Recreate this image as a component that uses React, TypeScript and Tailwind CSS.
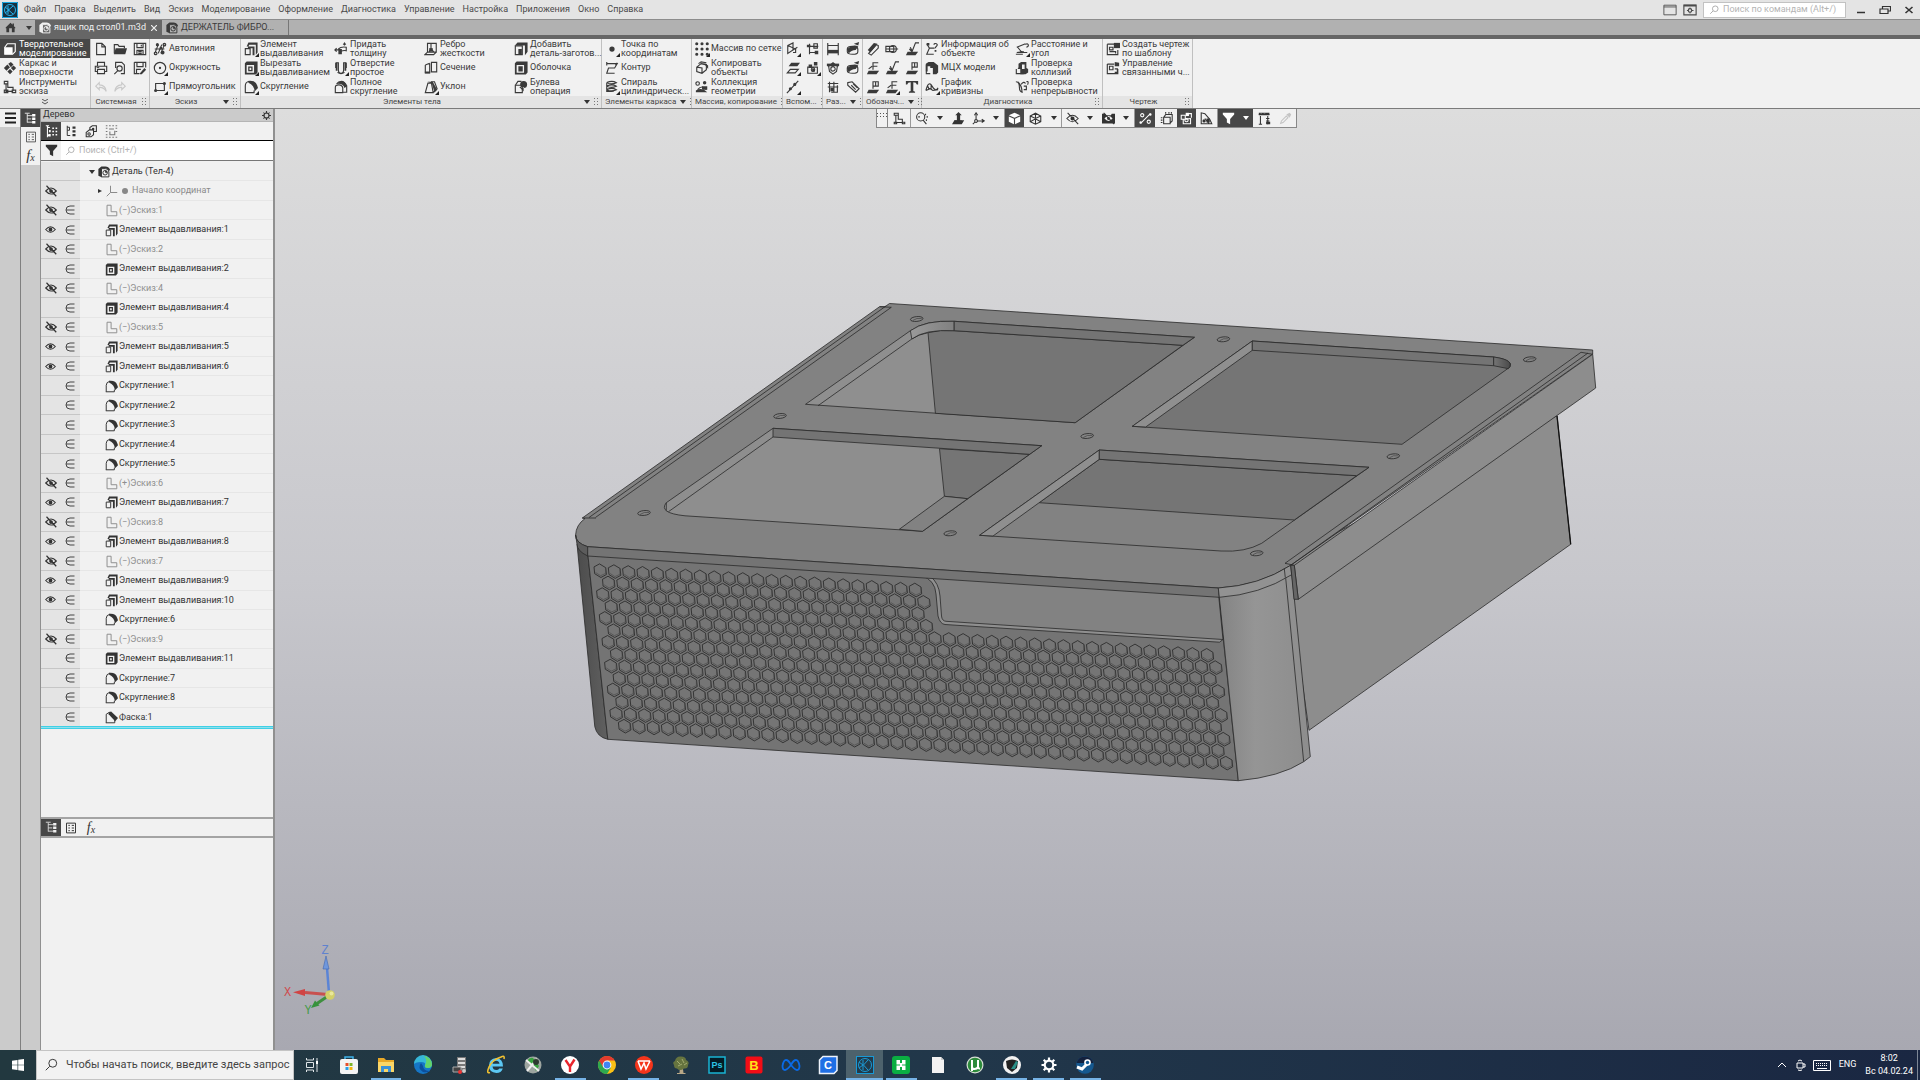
import React, { ReactNode } from "react";

const c = (x: number, y: number, r: number) =>
  `M${x - r} ${y}a${r} ${r} 0 1 0 ${2 * r} 0a${r} ${r} 0 1 0 ${-2 * r} 0z`;

/* Each glyph: [stroked path, filled path] on a 16x16 grid. */
const GLYPHS: Record<string, [string, string?]> = {
  solid: ["M2 6l3-4h9v9l-3 3H2z", "M2 6h9v8H2z"],
  surface: ["", "M1 8l4-4 3 3-4 4zM6 3l3-2 3 3-3 3zM9 8l3-3 3 3-3 3zM5 12l3-3 3 3-3 3z"],
  sketchTools: ["M3.500 4v9h8M5.500 3.500v5h6v4M1.500 1.500h4v3h-4zM1.500 11.500h4v3h-4zM10.500 11.500h4v3h-4z"],
  file: ["M3 1.5h6l4 4v9H3zM9 1.5v4h4"],
  folder: ["M1.5 13V3h4l1.5 2H13v2", "M3 7h13l-2 7H1z"],
  save: ["M1.5 1.5h13v13h-13zM4.500 1.500v5h7v-5M4.500 14.500v-5h7v5M6 11h4M6 13h4M9.500 3v2"],
  print: ["M4 6V1.500h8V6M4 12H1.500V6h13v6H12M4 9.500h8v5H4z", "M3 7h3v1H3z"],
  preview: ["M3 8V1.500h7l3 3v10H9" + c(7.5, 8.5, 3) + "M5.500 11l-4 4"],
  saveAs: ["M1.500 1.500h13v6M1.500 1.500v13h6M4.500 1.500v5h7v-5M4 14V9.500h5", "M8 14l5-6 2 2-5 5H8z"],
  undo: ["M6 3L2 7l4 4V8.500q5-.5 8 4.500q-.5-7-8-7.500z"],
  redo: ["M10 3l4 4-4 4V8.500q-5-.5-8 4.500q.5-7 8-7.500z"],
  autoline: ["M2 13L6 3M6 13L10 3M9 13l4-10M2 8h11" + c(3, 13, 1.5) + c(13, 3, 1.5), c(5, 3, 1.8) + c(11, 12, 2.2) + c(9, 7, 1.6)],
  circle: [c(8, 8, 6.5), c(8, 8, 1.3)],
  rect: ["M3 4h10v8H3z", c(3, 12, 1.800) + c(13, 4, 1.800)],
  extrude: ["M1.500 7.500h5.500v7H1.500z", "M3 5l2-4.500h10.500V12l-2 2.500V3H6L5 5zM4.500 5H12v10H9.800V7.200H4.500z"],
  cut: ["", "M1 2.500L3 .5h12.500V13l-2 2.500H1zM3 4.500v9h8.500v-9zM4.800 6.300h5v5.500h-5zM6.300 7.800v2.400h2V7.800z"],
  fillet: ["M1.500 14.500V6.500q0-4 4.500-5M1 14.500h10.500V12", "M5 1q8-1 10 5l1 3-4 4q0-7-7-10z"],
  chamfer: ["M1.500 14.500V4l4-2.500M1 14.500h11V11", "M4.500 1.500L7.500 .5l8.500 8-3.500 4L4.500 4z"],
  thicken: ["M5 8q3-3 9-2v4q-5-1-8 2M1 9h5M3 7L1 9l2 2M12 1v3", "M5 8h4v6H5zM10 3h4l-2-3z"],
  hole: ["M2 2h3v8q0 4 3 4t3-4V2h3M2 2v6M14 2v6M4 13q4 3 8 0", "M2 2h2v9H2zM12 2h2v9h-2z"],
  fullFillet: ["M1.500 14.500V8.500q0-3 4-3t4.500 3.500v5.500zM3 4.500Q5 1.500 8.500 1.500t6 5v7.500H10", "M3 4.500Q6 1 9.500 1.500t5 6L12 9Q10 3.500 3 4.500z"],
  rib: ["M4 1.500h10v10H4zM4 11.500l-3 3h10l3-3M8 2v7M6 11l2-3 3 3", "M6 7h4v4H6z"],
  section: ["M1.500 4.500v9h5v-11M6.500 2.500l-5 2M8.500 1.500h6v11h-6z", "M1 12h6v2H1z"],
  draft: ["M1.500 14.500l3-11h4l2 11zM8 2h4l3 8-4 4", "M4 2h6l5 9-3 3-3-10z"],
  addBlank: ["M1.500 4.500h8v10h-8z", "M1 4l3-3.500h11.500V11l-3 4V4zM5 8h4v6H5z"],
  shell: ["", "M1 2.500L3 .5h12.500V13l-2 2.500H1zM3 4.500v9h8.500v-9zM5 6h5v6H5z"],
  boolean: ["M1.500 6h8v8.500h-8zM1.500 6l3-4.500h4", c(11, 5, 4) + "M6 8h5v5z"],
  point: ["", c(8, 8, 3)],
  contour: ["M2 3h12l-3 5H4L2 14h9M2 1v4M14 2l-2 3"],
  spiral: ["M2 3q6-3 11 0-6 3-11 0M2 7q6-3 11 0-6 3-11 0M2 11q6-3 11 0-6 3-11 0M2 3v10h8"],
  array: ["", [2, 8, 14].map((x) => [2, 8, 14].map((y) => c(x, y, 1.8)).join("")).join("")],
  copyObj: ["M2 7l5-4 6 1v6l-5 4-6-2zM2 7l6 1v6M4 3l3-2 6 1", "M7 3l5 0 3 2v4l-3-4z"],
  collection: [c(3, 4, 2) + "M3 11q5-6 10 0", c(11, 3, 2) + "M8 7h6v4H8zM1 12q7-4 13 2H1z"],
  plane1: ["M2 4l6-3v8l-6 4zM2 4l9 4v4H8M2 13L13 6"],
  plane2: ["M4 2v12M2 5h12M4 12h8M9 2h4v5H9z", "M1 3h4v3H1zM10 10h4v4h-4z"],
  plane3: ["M1.500 13.500L5 9.500h9l-3.500 4z", "M3 6l3-4h10l-3 4z"],
  plane4: ["M2 7h11v7H2z" + c(8, 10, 2), "M3 4h4v4H3zM9 1h4v4H9zM7 9h3v3H7z"],
  axis: ["M1 15L14 1", c(5, 10, 1.800) + c(10, 5, 1.800)],
  dim1: ["M2 1v14M14 1v14M2 4h12M2 12h12", "M2 9h12v4H2z"],
  dim2: ["M1.500 8q0-3 6-3t6 3v3q0 3-6 3t-6-3z", "M1 8q7-6 13-3l-3 4q-5 0-8 4zM9 2l6-2-1 4z"],
  dim3: ["M3 6l5-4 5 4-1 6-4 3-4-3z" + c(8, 9, 2.500), "M1 3h14v3H1z"],
  dim4: ["M2 4h12M2 8h12M4 2v12M9 2v12M13 6v8H6", "M5 9h4v4H5z"],
  dim5: ["M2 3l5-1 8 8-4 4-9-8zM6 6l5 5M8 4l5 5"],
  mark1: ["M3 13l9-10 2 1v3l-8 8z", "M2 9l7-8 4 1-8 10z"],
  mark2: ["M1 5h9v6H1zM1 8h14" + c(9, 8, 4)],
  mark3: ["M5 8l3 3 4-10h4M6 6l2 4", "M3 11h12l-3 4H1z"],
  mark4: ["M8 10V2h6M8 6h5M3 9l4-3", "M3 11h12l-3 4H1z"],
  mark5: ["M8 10V2h6v5H8M11 2v5", "M3 11h12l-3 4H1z"],
  textT: ["", "M1 1h14v4h-1.500q-.5-2.500-4-2.500v10l2 1v1h-7v-1l2-1v-10q-3.500 0-4 2.500H1z"],
  info: ["M2 2l3 5-3 7h8M5 7h6M10 3q1-2 3-1t0 3l-1 1v1", "M2 1h3v3H2zM11 9h2v2h-2z"],
  mcx: ["M1.500 4v10.500H6", "M1 3l3-2h6l5 4v8l-2 2H9V8H6V6H3v6H1z"],
  graph: ["M1 12q3-12 7-5t7 2M1 12l5-2 3 2 6-1M3 7l2 4M7 5v6"],
  measure: ["M2 6l10-4M3 6l5 6h6M2 12l8-1M12 3q2-2 3 0t-2 3M1 14h8"],
  collide: ["M1.500 9v5.500H10", "M4 3l3-2h6v7l2 1v4l-3 2H6V9H3l1-2zM8 4v5h3V4z"],
  continuity: ["M1 2q4 0 4 6t4 6M3 2q5 4 5 12M7 5q3-4 5-1M10 7h3v4h-3M13 2q2-1 2 1t-1 2"],
  drawing1: ["M1.500 2.500h8M1.500 2.500v12h12V9M4 6h4v3H4zM4 11h7v2", "M9 1h7v6H9z"],
  drawing2: ["M1.500 3.500h8M1.500 3.500v11h12V9M4 6h4v4H4zM10 9h3v4h-3", "M10 1l5 1v4h-5z"],
  gear: [c(8, 8, 4.500), "M7 0h2v4H7zM7 12h2v4H7zM0 7h4v2H0zM12 7h4v2h-4zM2 3l1-1 3 3-1 1zM13 2l1 1-3 3-1-1zM2 13l3-3 1 1-3 3zM10 11l1-1 3 3-1 1z"],
  tree: ["M4 2v11M4 4.500h6M4 12.500h6M1 1.500h6M4 8.500h5", "M10 2.500h4v3h-4zM10 6.800h4v3h-4zM10 11h4v3h-4z"],
  treeA: ["M3 1v14M3 3h3M3 13h3M1 1h4", "M5 6h2v3H5zM9 3h2v2H9zM13 3h2v2h-2zM9 7h2v2H9zM13 7h2v2h-2zM9 11h2v2H9zM13 11h2v2h-2zM4 11h3v3H4z"],
  treeB: ["M3 1v13h4M3 3h3v4H3", "M10 2h4v3h-4zM10 7h4v3h-4zM10 12h4v3h-4z"],
  parts: ["M6 6V3l3-2h5v7h-3M1.500 9l4-3h5v6l-3 2.500h-6z" + c(5, 11, 1.500), c(10, 5, 1.500)],
  dotted: ["M1 1h2M5 1h2M9 1h2M13 1h2M1 4h2M5 5h6M13 4h2M1 8h2M6 8v4h6V7M13 8h2M1 12h2M1 15h2M5 15h2M9 15h2M13 15h2"],
  sheet: ["M2 1.500h12v13H2zM4.500 4.500h2M9 4.500h3M4.500 8h2M9 8h3M4.500 11.500h2M9 11.500h3"],
  funnel: ["", "M1 1h14v2L10 8.500V15l-4-2V8.500L1 3z"],
  search: [c(10, 6, 4.500) + "M6.500 9.500L2 14"],
  sketch: ["M2.500 1.500h5v8h7v5h-12z"],
  sketchView: ["M3.500 4v9h8M6.500 4v5h5v4M1.500 1.500h5v2.500h-5zM1.500 12.500h3v2h-3zM11.500 12.500h3v2h-3z"],
  origin: ["M6 1v9l-5 5M6 10h9"],
  part: ["M4.500 3.500H10q4.500 0 4.500 4.500v6.500h-10z" + c(9.500, 9, 3), "M.5 4l4-3.500H10q4 0 6 4l-1 2q-2-3.500-5-3.500H5V15l-4.500-2zM9.500 9V6a3 3 0 0 1 3 3z"],
  home: ["", "M1 8l7-7 3 3V2h2v4l2 2v1h-1v6h-4V9H6v6H2V9H1z"],
  cube: ["", "M1 4l7-3 7 3-7 3zM1 5.500l6.300 2.700V15L1 12zM15 5.500L8.700 8.200V15L15 12z"],
  wire: ["M1.500 5L8 1.500 14.500 5v7L8 15l-6.500-3zM1.500 5L8 8l6.500-3M8 1.500V15M1.500 12L8 8.500l6.500 3.500"],
  eyeOff: ["M1 8q7-8 14 0-7 8-14 0zM2 1l13 14", c(8, 8, 2.500)],
  eye: ["M1 8q7-8 14 0-7 8-14 0z", c(8, 8, 2.800)],
  camEye: ["M2 1l13 14", "M0 2h4l1 2h6l1-2h4v12H0zM3 8q5 6 10 0-5-6-10 0z" + c(8, 8, 1.800)],
  orient: ["M3 11h9", "M8 0l4 4h-2v6H6V4H4zM3 10h12l-3 5H0z"],
  axes: ["M5 10V3M6 11h8M4 12l-3 3M12 9l3 2-3 2M3 4l2-3 2 3" + c(5, 11, 1.800)],
  magnify: [c(7, 6, 5) + "M10 10l4 5M13 2v2M15 5v2M14 9v2M4 6h2"],
  constraints: ["M2 14L14 2" + c(4, 4, 2) + c(12, 12, 2), c(2, 13, 1.500) + c(14, 3, 1.500)],
  layers: ["M4.500 6.500h8V14.500h-8zM5 6l2-3h8v8l-2 2M1 7h2M1 10h2M1 13h2M7 0v2M11 0v2M14 0v2"],
  bodies: ["M1.500 4h5v5h-5zM9 2h5v5M4 9v5.500h9V8z" + c(8, 10, 2), "M7 1h4v4H7z"],
  bend: ["M1.500 1v13.500h13L12 9 6 2zM6 8l5 6", c(5, 11, 2) + "M8 8h4v5H8z"],
  crane: ["M3 5v10M1 15h4M1 3h13M12 5v10M10 8h4M10 11h4", "M10 12h5v3h-5zM1 1h13v3H1zM3 2v1h2V2zM7 2v1h2V2z"],
  dropper: ["M2 14l1-3 6-6 2 2-6 6z", "M9 3l4-2 2 2-2 4z"],
  window: ["M1 2.500h14v11H1zM1 4.500h14"],
  windowGear: ["M1 2.500h14v11H1z" + c(8, 8.500, 2), "M1 2h14v2H1zM7.500 5h1v2h-1zM7.500 10h1v2h-1zM4.500 8h2v1h-2zM10 8h2v1h-2z"],
};

function Glyph({ n, className = "size-[14px]", w = 1.300 }: { n: string; className?: string; w?: number }) {
  const [s, f] = GLYPHS[n];
  return (
    <svg viewBox="0 0 16 16" className={"block shrink-0 " + className} aria-hidden="true">
      {s && <path d={s} fill="none" stroke="currentColor" strokeWidth={w} />}
      {f && <path d={f} fill="currentColor" fillRule="evenodd" />}
    </svg>
  );
}

const Caret = ({ className = "" }: { className?: string }) => (
  <svg viewBox="0 0 6 4" className={"block h-1 w-[6px] shrink-0 " + className} aria-hidden="true">
    <path d="M0 0h6L3 4z" fill="currentColor" />
  </svg>
);

const Grip = () => (
  <svg viewBox="0 0 4 8" className="block h-2 w-1 shrink-0" aria-hidden="true">
    <path d="M0 0h1v1H0zM3 0h1v1H3zM0 3h1v1H0zM3 3h1v1H3zM0 6h1v1H0zM3 6h1v1H3z" fill="#777" />
  </svg>
);

/* ---------- Ribbon ---------- */

type Tool = { i: string; t?: string[]; drop?: boolean; dim?: boolean; label?: string };

function ToolButton({ i, t, drop, dim, label }: Tool) {
  return (
    <button
      aria-label={label ?? t?.join(" ") ?? i}
      className={"flex h-[19px] min-w-0 items-center gap-[2px] pl-[3px] text-left " + (dim ? "text-[#c9c9c9]" : "text-[#3a3a3a]")}
    >
      <span className="relative">
        <Glyph n={i} />
        {drop && (
          <svg viewBox="0 0 4 4" className="absolute -right-px -bottom-px size-1" aria-hidden="true">
            <path d="M4 0v4H0z" fill="#222" />
          </svg>
        )}
      </span>
      {t && (
        <span className="text-[9px] leading-[9px] whitespace-nowrap">
          {t.map((l) => (
            <span key={l} className="block">
              {l}
            </span>
          ))}
        </span>
      )}
    </button>
  );
}

type GroupDef = { name: string; width: string; cols: string; more?: boolean; tools: (Tool | null)[] };

const GROUPS: GroupDef[] = [
  {
    name: "Системная", width: "w-[59px]", cols: "grid-cols-3",
    tools: [
      { i: "file", label: "Создать" }, { i: "print", label: "Печать" }, { i: "undo", dim: true, label: "Отменить" },
      { i: "folder", label: "Открыть" }, { i: "preview", label: "Просмотр" }, { i: "redo", dim: true, label: "Повторить" },
      { i: "save", label: "Сохранить" }, { i: "saveAs", label: "Сохранить как" },
    ],
  },
  {
    name: "Эскиз", width: "w-[91px]", cols: "grid-cols-1", more: true,
    tools: [
      { i: "autoline", t: ["Автолиния"] }, { i: "circle", t: ["Окружность"], drop: true }, { i: "rect", t: ["Прямоугольник"], drop: true },
    ],
  },
  {
    name: "Элементы тела", width: "w-[361px]", cols: "grid-cols-4", more: true,
    tools: [
      { i: "extrude", t: ["Элемент", "выдавливания"], drop: true }, { i: "cut", t: ["Вырезать", "выдавливанием"], drop: true }, { i: "fillet", t: ["Скругление"], drop: true },
      { i: "thicken", t: ["Придать", "толщину"] }, { i: "hole", t: ["Отверстие", "простое"], drop: true }, { i: "fullFillet", t: ["Полное", "скругление"] },
      { i: "rib", t: ["Ребро", "жесткости"] }, { i: "section", t: ["Сечение"] }, { i: "draft", t: ["Уклон"], drop: true },
      { i: "addBlank", t: ["Добавить", "деталь-заготов..."] }, { i: "shell", t: ["Оболочка"] }, { i: "boolean", t: ["Булева", "операция"] },
    ],
  },
  {
    name: "Элементы каркаса", width: "w-[90px]", cols: "grid-cols-1", more: true,
    tools: [
      { i: "point", t: ["Точка по", "координатам"], drop: true }, { i: "contour", t: ["Контур"] }, { i: "spiral", t: ["Спираль", "цилиндрическ..."], drop: true },
    ],
  },
  {
    name: "Массив, копирование", width: "w-[91px]", cols: "grid-cols-1",
    tools: [
      { i: "array", t: ["Массив по сетке"], drop: true }, { i: "copyObj", t: ["Копировать", "объекты"] }, { i: "collection", t: ["Коллекция", "геометрии"] },
    ],
  },
  {
    name: "Вспом...", width: "w-[40px]", cols: "grid-cols-2",
    tools: [{ i: "plane1", drop: true }, { i: "plane3", drop: true }, { i: "axis", drop: true }, { i: "plane2" }, { i: "plane4", drop: true }],
  },
  {
    name: "Раз...", width: "w-[40px]", cols: "grid-cols-2", more: true,
    tools: [{ i: "dim1" }, { i: "dim3" }, { i: "dim4" }, { i: "dim2" }, { i: "dim2" }, { i: "dim5" }],
  },
  {
    name: "Обознач...", width: "w-[59px]", cols: "grid-cols-3", more: true,
    tools: [{ i: "mark1" }, { i: "mark4" }, { i: "mark5" }, { i: "mark2" }, { i: "mark3" }, { i: "mark4", drop: true }, { i: "mark3" }, { i: "mark5" }, { i: "textT" }],
  },
  {
    name: "Диагностика", width: "w-[181px]", cols: "grid-cols-2",
    tools: [
      { i: "info", t: ["Информация об", "объекте"] }, { i: "mcx", t: ["МЦХ модели"] }, { i: "graph", t: ["График", "кривизны"], drop: true },
      { i: "measure", t: ["Расстояние и", "угол"], drop: true }, { i: "collide", t: ["Проверка", "коллизий"] }, { i: "continuity", t: ["Проверка", "непрерывности"] },
    ],
  },
  {
    name: "Чертеж", width: "w-[90px]", cols: "grid-cols-1",
    tools: [{ i: "drawing1", t: ["Создать чертеж", "по шаблону"] }, { i: "drawing2", t: ["Управление", "связанными ч..."] }],
  },
];

function Group({ g }: { g: GroupDef }) {
  return (
    <section className={"flex shrink-0 flex-col border-r border-[#c0c0c0] " + g.width}>
      <div className={"grid h-[57px] grid-flow-col grid-rows-3 " + g.cols}>
        {g.tools.map((t, k) => t && <ToolButton key={k} {...t} />)}
      </div>
      <div className="flex h-3 items-center gap-1 bg-[#e4e4e4] pr-[3px] pl-[3px] text-[8px] leading-[12px] whitespace-nowrap text-[#444]">
        <span className="grow text-center">{g.name}</span>
        {g.more && <Caret className="text-[#333]" />}
        <Grip />
      </div>
    </section>
  );
}

const MODES: [string, string, string][] = [
  ["solid", "Твердотельное", "моделирование"],
  ["surface", "Каркас и", "поверхности"],
  ["sketchTools", "Инструменты", "эскиза"],
];

function Ribbon() {
  return (
    <div className="flex h-[70px] shrink-0 border-b border-[#7b7b7b] bg-[#f1f1f1]">
      <section className="flex w-[91px] shrink-0 flex-col border-r border-[#c0c0c0]">
        {MODES.map(([i, a, b], k) => (
          <button
            key={i}
            className={"flex h-[19px] items-center gap-[2px] pl-[3px] text-left text-[9px] leading-[9px] whitespace-nowrap " + (k === 0 ? "bg-[#474747] text-white" : "text-[#3a3a3a]")}
          >
            <Glyph n={i} />
            <span>
              <span className="block">{a}</span>
              <span className="block">{b}</span>
            </span>
          </button>
        ))}
        <button aria-label="Развернуть" className="flex h-3 items-center justify-center bg-[#e4e4e4] text-[#555]">
          <svg viewBox="0 0 6 6" className="size-[6px]" aria-hidden="true">
            <path d="M0 0l3 2 3-2M0 3l3 2 3-2" fill="none" stroke="currentColor" />
          </svg>
        </button>
      </section>
      {GROUPS.map((g) => (
        <Group key={g.name} g={g} />
      ))}
    </div>
  );
}

/* ---------- Title bars ---------- */

const MENU = ["Файл", "Правка", "Выделить", "Вид", "Эскиз", "Моделирование", "Оформление", "Диагностика", "Управление", "Настройка", "Приложения", "Окно", "Справка"];

function MenuBar() {
  return (
    <header className="flex h-[19px] shrink-0 items-center bg-[#e4e4e4] text-[9px] text-[#4a4a4a]">
      <svg viewBox="0 0 16 16" className="ml-[2px] size-4" aria-hidden="true">
        <rect width="16" height="16" fill="#17303f" />
        <path d="M.5 .5h15v15H.5z" fill="none" stroke="#1aa7e0" />
        <path d={c(8, 8, 5.500) + "M6 4v8M11 4L6.500 8 11 12M3 5l4 3-4 3"} fill="none" stroke="#25b4f0" />
      </svg>
      <nav className="ml-[6px] flex gap-2 pt-px">
        {MENU.map((m) => (
          <button key={m}>{m}</button>
        ))}
      </nav>
      <div className="ml-auto flex items-center">
        <button aria-label="Окно" className="mr-[6px]"><Glyph n="window" className="size-[14px]" w={1} /></button>
        <button aria-label="Настройка вида" className="mr-[6px]"><Glyph n="windowGear" className="size-[14px]" /></button>
        <label className="flex h-4 w-[143px] items-center gap-1 border border-[#c2c2c2] bg-white pl-[5px] text-[#aaa]">
          <Glyph n="search" className="size-[10px]" w={1.500} />
          <input aria-label="Поиск по командам" placeholder="Поиск по командам (Alt+/)" className="w-full min-w-0 bg-transparent outline-none placeholder:text-[#b4b4b4]" />
        </label>
        <div className="flex w-[74px] items-center justify-around pl-1 text-[#333]">
          <button aria-label="Свернуть">
            <svg viewBox="0 0 10 10" className="size-[10px]"><path d="M1 7.500h8" stroke="currentColor" strokeWidth="1.500" /></svg>
          </button>
          <button aria-label="Восстановить">
            <svg viewBox="0 0 12 10" className="h-[10px] w-3"><path d="M1 4h8v4.500H1zM3.500 4V1.500h8V6H9" fill="none" stroke="currentColor" strokeWidth="1.200" /></svg>
          </button>
          <button aria-label="Закрыть">
            <svg viewBox="0 0 10 10" className="size-[10px]"><path d="M1.500 2l7 6M8.500 2l-7 6" stroke="currentColor" strokeWidth="1.600" /></svg>
          </button>
        </div>
      </div>
    </header>
  );
}

function TabBar() {
  return (
    <div className="flex h-5 shrink-0 border-t border-b-4 border-t-[#8c8c8c] border-b-[#666] bg-[#b1b1b1] text-[9px] text-[#3a3a3a]">
      <button aria-label="Главная" className="flex w-[35px] shrink-0 items-center gap-[10px] pl-[5px]">
        <Glyph n="home" className="size-[11px]" />
        <Caret />
      </button>
      <button className="flex w-[127px] shrink-0 items-center gap-[3px] bg-[#666] pt-px pl-1 whitespace-nowrap text-[#f0f0f0]">
        <Glyph n="part" className="size-3" />
        <span className="w-[94px] text-left">ящик под стол01.m3d</span>
        <svg viewBox="0 0 6 6" className="size-[6px]" aria-hidden="true"><path d="M0 0l6 6M6 0L0 6" stroke="currentColor" strokeWidth="1.200" /></svg>
      </button>
      <button className="flex w-[127px] shrink-0 items-center gap-[3px] border-r border-[#777] pt-px pl-1 whitespace-nowrap">
        <Glyph n="part" className="size-3" />
        ДЕРЖАТЕЛЬ ФИБРО...
      </button>
    </div>
  );
}

/* ---------- Tree panel ---------- */

type Row = { k: "s" | "e" | "c" | "f" | "h"; t: string; eye?: "on" | "off"; fixed?: boolean };
const ROWS: Row[] = [
  { k: "s", t: "Эскиз:1", eye: "off" }, { k: "e", t: "Элемент выдавливания:1", eye: "on" },
  { k: "s", t: "Эскиз:2", eye: "off" }, { k: "c", t: "Элемент выдавливания:2" },
  { k: "s", t: "Эскиз:4", eye: "off" }, { k: "c", t: "Элемент выдавливания:4" },
  { k: "s", t: "Эскиз:5", eye: "off" }, { k: "e", t: "Элемент выдавливания:5", eye: "on" },
  { k: "e", t: "Элемент выдавливания:6", eye: "on" }, { k: "f", t: "Скругление:1" },
  { k: "f", t: "Скругление:2" }, { k: "f", t: "Скругление:3" }, { k: "f", t: "Скругление:4" }, { k: "f", t: "Скругление:5" },
  { k: "s", t: "Эскиз:6", eye: "off", fixed: true }, { k: "e", t: "Элемент выдавливания:7", eye: "on" },
  { k: "s", t: "Эскиз:8", eye: "off" }, { k: "e", t: "Элемент выдавливания:8", eye: "on" },
  { k: "s", t: "Эскиз:7", eye: "off" }, { k: "e", t: "Элемент выдавливания:9", eye: "on" },
  { k: "e", t: "Элемент выдавливания:10", eye: "on" }, { k: "f", t: "Скругление:6" },
  { k: "s", t: "Эскиз:9", eye: "off" }, { k: "c", t: "Элемент выдавливания:11" },
  { k: "f", t: "Скругление:7" }, { k: "f", t: "Скругление:8" }, { k: "h", t: "Фаска:1" },
];
const ROW_ICON = { s: "sketch", e: "extrude", c: "cut", f: "fillet", h: "chamfer" } as const;

function TreeRow({ eye, member, children }: { eye?: "on" | "off"; member?: boolean; children: ReactNode }) {
  return (
    <li className="flex min-h-0 flex-1">
      <div className="flex w-[39px] shrink-0 items-center border-b border-[#c6c6c6] bg-[#e4e4e4] text-[#333]">
        <span className="flex w-5 justify-center">
          {eye && (
            <button aria-label="Видимость">
              <Glyph n={eye === "on" ? "eye" : "eyeOff"} className={eye === "on" ? "size-[11px]" : "size-3"} w={1.600} />
            </button>
          )}
        </span>
        <span className="flex w-5 justify-center">
          {member && (
            <svg viewBox="0 0 10 10" className="size-[10px]" aria-label="Включено" role="img">
              <path d="M9.500 1H5a4 4 0 0 0 0 8h4.500M1 5h8.500" fill="none" stroke="#444" />
            </svg>
          )}
        </span>
      </div>
      <div className="flex min-w-0 grow items-center border-b border-[#e6e6e6] pt-px whitespace-nowrap">{children}</div>
    </li>
  );
}

function ViewTabs() {
  return (
    <div className="flex h-[21px] shrink-0 items-center border-t-2 border-b-2 border-[#a4a4a4] bg-[#f1f1f1] text-[#333]">
      <button aria-label="Дерево" className="flex h-full w-5 items-center justify-center bg-[#474747] text-[#eee]"><Glyph n="tree" className="size-[13px]" w={1} /></button>
      <button aria-label="Параметры" className="flex h-full w-5 items-center justify-center"><Glyph n="sheet" className="size-3" /></button>
      <button aria-label="Переменные" className="flex h-full w-5 items-center justify-center font-['Liberation_Serif',serif] text-[14px] italic">f<sub className="text-[10px]">x</sub></button>
    </div>
  );
}

function TreePanel() {
  return (
    <aside className="flex w-[235px] shrink-0 flex-col border-r-2 border-l border-[#909090] bg-[#f1f1f1] text-[9px] text-[#333]">
      <div className="flex h-[13px] shrink-0 items-center justify-between border-b border-[#b5b5b5] bg-[#cbcbcb] pr-[2px] pl-[2px]">
        <h2>Дерево</h2>
        <button aria-label="Настройки"><Glyph n="gear" className="size-[9px]" w={2} /></button>
      </div>
      <div className="flex h-[19px] shrink-0 items-center border-b border-black">
        <button aria-label="Структура" className="flex h-full w-5 items-center justify-center bg-[#474747] text-white"><Glyph n="treeA" className="size-[13px]" /></button>
        <button aria-label="Список" className="flex h-full w-5 items-center justify-center"><Glyph n="treeB" className="size-3" /></button>
        <button aria-label="Тела" className="flex h-full w-5 items-center justify-center"><Glyph n="parts" className="size-[13px]" /></button>
        <button aria-label="Область" className="flex h-full w-5 items-center justify-center text-[#777]"><Glyph n="dotted" className="size-[13px]" /></button>
      </div>
      <label className="mb-px flex h-5 shrink-0 items-center border-b border-[#777] bg-white text-[#b0b0b0]">
        <span className="flex h-full w-5 shrink-0 items-center justify-center bg-[#f1f1f1] text-[#333]"><Glyph n="funnel" className="size-[13px]" /></span>
        <Glyph n="search" className="mr-1 ml-1 size-[10px]" w={1.500} />
        <input aria-label="Поиск" placeholder="Поиск (Ctrl+/)" className="w-full min-w-0 bg-transparent outline-none placeholder:text-[#b4b4b4]" />
      </label>
      <ul className="flex h-[565px] shrink-0 flex-col">
        <TreeRow>
          <Caret className="mr-[3px] ml-[9px]" />
          <Glyph n="part" className="mr-[2px] size-3" />
          Деталь (Тел-4)
        </TreeRow>
        <TreeRow eye="off">
          <svg viewBox="0 0 4 4" className="mr-1 ml-[18px] size-1"><path d="M0 0l4 2-4 2z" fill="#333" /></svg>
          <Glyph n="origin" className="size-3 text-[#888]" />
          <span className="mx-1 size-[6px] rounded-full bg-[#888]" />
          <span className="text-[#8a8a8a]">Начало координат</span>
        </TreeRow>
        {ROWS.map((r) => (
          <TreeRow key={r.t} eye={r.eye} member>
            <span className={"ml-[25px] flex items-center gap-[1px] " + (r.k === "s" ? "text-[#8e8e8e]" : "")}>
              <Glyph n={ROW_ICON[r.k]} className="size-[13px]" w={1.200} />
              {r.k === "s" ? (r.fixed ? "(+)" : "(−)") + r.t : r.t}
            </span>
          </TreeRow>
        ))}
      </ul>
      <div className="-mt-px h-[3px] shrink-0 border-y border-[#3fd0e6] bg-[#8fdfec]" />
      <div className="h-[88px] shrink-0" />
      <ViewTabs />
    </aside>
  );
}

/* ---------- Model drawing ---------- */

const SLOPE = 0.0613;
const hex = (cx: number, cy: number, r: number) =>
  "M" +
  [0, 1, 2, 3, 4, 5]
    .map((k) => {
      const a = (Math.PI / 3) * k - Math.PI / 2;
      const dx = r * Math.cos(a);
      const dy = r * Math.sin(a);
      return `${(cx + dx + dy * 0.1).toFixed(1)} ${(cy + dy + dx * SLOPE).toFixed(1)}`;
    })
    .join("L") +
  "z";

const HONEYCOMB: [number, number][] = [];
for (let r = 0; r < 14; r++) {
  const n = r < 4 ? 23 : 43;
  for (let k = 0; k < n; k++) {
    HONEYCOMB.push([600.2 + r * 1.33 + (r % 2) * 7.15 + k * 14.33, 570.7 + r * 11.93 + (r % 2) * 0.4 + k * 14.33 * SLOPE]);
  }
}
const HEX_FACE = HONEYCOMB.map(([x, y]) => hex(x, y, 6.8)).join("");
const HEX_DEPTH = HONEYCOMB.map(([x, y]) => `M${(x - 4.6).toFixed(1)} ${(y + 1.8).toFixed(1)}l5 3.200l5-2.300v-5.500`).join("");

const HOLES = [[916.7, 319], [1223.4, 339.3], [780, 416], [1087.2, 436], [644, 513], [950.2, 533.3], [1529.7, 359.3], [1393.3, 456.3], [1256.7, 553.3]];

function Model() {
  return (
    <svg viewBox="275 109 1645 941" className="block h-full w-full" role="img" aria-label="Модель ящика" strokeLinejoin="round">
      <defs>
        <linearGradient id="corner" x1="0" x2="1">
          <stop offset="0" stopColor="#838383" />
          <stop offset=".4" stopColor="#959595" />
          <stop offset="1" stopColor="#8d8d8d" />
        </linearGradient>
        <linearGradient id="leftCorner" x1="0" x2="1">
          <stop offset="0" stopColor="#4c4c4c" />
          <stop offset="1" stopColor="#606060" />
        </linearGradient>
        <linearGradient id="arc" x1="0" x2="1">
          <stop offset="0" stopColor="#9a9a9a" />
          <stop offset="1" stopColor="#808080" />
        </linearGradient>
        <linearGradient id="arcDark" x1="0" x2="1">
          <stop offset="0" stopColor="#757575" />
          <stop offset="1" stopColor="#4a4a4a" />
        </linearGradient>
      </defs>
      <g stroke="#2a2a2a" strokeWidth="0.8">
        <path d="M1285 560L1557 415.700L1570.700 544.300L1309 730.300z" fill="#8d8d8d" />
        <path d="M1557 415.700L1570.700 544.300" stroke="#111" strokeWidth="1.300" />
        <path d="M577 544L594.800 726.700Q597 737 607.800 739.300L587.700 553z" fill="url(#leftCorner)" />
        <path d="M587.700 553L607.800 739.300L1238.300 780.700L1218.500 594z" fill="#747474" />
        <path d="M1218.500 590L1238.300 780.700Q1280 777 1303.700 761.700L1310.300 756.700L1291 566z" fill="url(#corner)" />
        <path d="M1284.500 566L1303.700 761.700" fill="none" />
        <path d={HEX_FACE} fill="#757575" stroke="#242424" strokeWidth="0.8" />
        <path d={HEX_DEPTH} fill="none" stroke="#444" strokeWidth="0.600" />
        <path d="M922 576Q935 580 936 594L938 616Q940 624 945 624.500L1219.500 642.200L1223 639.500L1218.500 594z" fill="#8f8f8f" />
        <path d="M930 576Q939 583 940 596L941.500 616Q942 621 946 621.300L1223 639.500L1218.500 594z" fill="#828282" />

        <path d="M889.500 303.500L1592.700 350V354L1290.700 565.300Q1259 586 1218.300 588L587.700 546.700Q575.600 543 575.600 535Q576 525 585 518.500L582.300 518L879.600 306.700H885z" fill="#828282" />
        <path d="M575.600 535Q575.600 543 587.700 546.700V556Q577 551 577 544z" fill="#5c5c5c" />
        <path d="M587.700 546.700L1218.300 588L1219.300 597.300L587.700 556z" fill="#747474" />
        <path d="M1218.300 588Q1259 585.500 1290.700 565.300L1291.700 574.700Q1260 594.500 1219.300 597.300z" fill="#929292" />
        <path d="M1284.300 568.700l1 9" />
        <path d="M891.300 307.300L595.700 517.300M886 306L589 517.500M582.300 518H596M879.600 306.700L891.300 307.300M1285 563.300L1581 352.300L1592.700 354.300M1285 563.300l9.300 2M1290.700 565.300L1588 353" fill="none" />
        <path d="M1294.300 565.300L1592.700 354.300L1595.700 388L1298.300 599.300z" fill="#8d8d8d" />
        <path d="M1290.700 565.300H1294.300L1298.300 599.300H1294z" fill="#666" />

        <path d="M805.500 404.300L910.400 330.700Q925 320 954.200 321.300L1194.400 337.300L1075.200 422.700z" fill="#8f8f8f" />
        <path d="M928 332.700Q940 329.500 954 330.700L1182.800 345.300L1075.200 422.700L935.400 413.300z" fill="#757575" />
        <path d="M818 405.700L911.800 339Q918 334.500 928 332.700" fill="none" />
        <path d="M910.400 330.700Q925 320 954.200 321.300V330.700Q925 329 911.800 339z" fill="url(#arc)" />
        <path d="M954.200 321.300L1194.400 337.300L1182.800 345.300L954.200 330.700z" fill="#747474" />

        <path d="M1132.300 426.300L1252.300 341L1493.700 357Q1514 360 1510 367L1402 444.300z" fill="#757575" />
        <path d="M1132.300 426.300L1252.300 341V350.300L1145.700 427z" fill="#8f8f8f" />
        <path d="M1252.300 341L1493.700 357V365.700L1252.300 350.300z" fill="#747474" />
        <path d="M1493.700 357Q1516 360 1508.300 368.700L1493.700 365.700z" fill="url(#arcDark)" />

        <path d="M773 428.300L1041.700 445.700L922.500 531.300L685 515.800Q658 513 666.300 502.700z" fill="#8e8e8e" />
        <path d="M939.500 448.700L1029.600 454.300L967.600 498.700L944.400 496.300z" fill="#757575" />
        <path d="M944.400 496.300L967.600 498.700L922.500 531.300L899.300 529.300z" fill="#828282" />
        <path d="M773 428.300L1041.700 445.700L1029.600 454.300L773 437z" fill="#747474" />
        <path d="M773 437L668.500 511.700M666.300 502.700v8" fill="none" />

        <path d="M1099.300 450L1369 467.300L1261.700 543.300Q1245 552.500 1221 551L979.600 535.300z" fill="#828282" />
        <path d="M1099.300 459.300L1356.700 475.700L1294.300 520L1039 502.700z" fill="#757575" />
        <path d="M1099.300 450L979.600 535.300L993 536L1099.300 459.300z" fill="#8f8f8f" />
        <path d="M1099.300 450L1369 467.300L1356.700 475.700L1099.300 459.300z" fill="#747474" />

        {HOLES.map(([x, y]) => (
          <g key={x}>
            <ellipse cx={x} cy={y} rx="6.300" ry="2.400" fill="#858585" transform={`rotate(-6 ${x} ${y})`} />
            <path d={`M${x - 4} ${y + 1.5}q4-3 9-2`} fill="none" stroke="#444" strokeWidth="0.700" />
          </g>
        ))}
      </g>

      <g fontFamily="Liberation Mono, monospace" fontSize="12">
        <path d="M329 993L327 968" stroke="#5a84d6" strokeWidth="2.500" />
        <path d="M326 956l-3 13h6z" fill="#6f97dc" stroke="#4166b0" strokeWidth="0.600" />
        <path d="M328 994.500L305 992.500" stroke="#c8504f" strokeWidth="3" />
        <path d="M293 992.300l12-3.300v7z" fill="#d04444" />
        <path d="M328 996L317 1003.500" stroke="#3f8f3f" strokeWidth="3" />
        <path d="M311 1008l4-7.500 4.500 5z" fill="#36933c" />
        <circle cx="330" cy="995" r="4.800" fill="#d3d069" />
        <circle cx="331.500" cy="993.500" r="2" fill="#e9e79a" />
        <text x="321.500" y="954" fill="#5f82cf">Z</text>
        <text x="284" y="996" fill="#cf4c50">X</text>
        <text x="304.500" y="1014" fill="#459a49">Y</text>
      </g>
    </svg>
  );
}

const VIEW_TOOLS: { i?: string; on?: boolean; car?: boolean; sep?: boolean; dim?: boolean; w: string; l?: string }[] = [
  { i: "sketchView", w: "w-[23px]", sep: true, l: "Эскиз" },
  { i: "magnify", w: "w-5", l: "Масштаб" }, { car: true, w: "w-[17px]" },
  { i: "orient", w: "w-5", l: "Ориентация" }, { i: "axes", w: "w-5", l: "Оси" }, { car: true, w: "w-[17px]", sep: true },
  { i: "cube", on: true, w: "w-[19px]", l: "Полутоновое" }, { i: "wire", w: "w-[22px]", l: "Каркас" }, { car: true, w: "w-[16px]", sep: true },
  { i: "eyeOff", w: "w-5", l: "Скрыть" }, { car: true, w: "w-4" },
  { i: "camEye", w: "w-5", l: "Камера" }, { car: true, w: "w-[17px]", sep: true },
  { i: "constraints", on: true, w: "w-5", l: "Ограничения" }, { i: "layers", w: "w-[22px]", l: "Слои" },
  { i: "bodies", on: true, w: "w-[19px]", l: "Тела" }, { i: "bend", w: "w-[22px]", sep: true, l: "Разрез" },
  { i: "funnel", on: true, w: "w-5", l: "Фильтр" }, { car: true, on: true, w: "w-[15px]" },
  { i: "crane", w: "w-[22px]", l: "Измерение" }, { i: "dropper", dim: true, w: "w-[21px]", l: "Пипетка" },
];

function ViewToolbar() {
  return (
    <div className="absolute top-0 left-[601px] flex h-[19px] border border-t-0 border-[#888] bg-[#f1f1f1]">
      <span className="flex w-[11px] justify-center border-r border-[#888] pt-1">
        <svg viewBox="0 0 10 5" className="h-[5px] w-[10px]" aria-hidden="true">
          <path d="M0 .5h10M0 3.500h10" stroke="#555" strokeDasharray="1 2" />
        </svg>
      </span>
      {VIEW_TOOLS.map((t, k) => (
        <button
          key={k}
          aria-label={t.l ?? "Список"}
          className={
            "flex items-center justify-center " + t.w +
            (t.on ? " bg-[#474747] text-white" : t.dim ? " text-[#c4c4c4]" : " text-[#333]") +
            (t.sep ? " border-r border-[#999]" : "")
          }
        >
          {t.car ? <Caret /> : <Glyph n={t.i!} className="size-[13px]" />}
        </button>
      ))}
    </div>
  );
}

/* ---------- Taskbar ---------- */

const S = ({ children }: { children: ReactNode }) => (
  <svg viewBox="0 0 20 20" className="block size-5" aria-hidden="true">
    {children}
  </svg>
);
const Letter = ({ x = 10, y = 14, size = 11, fill = "#fff", children }: { x?: number; y?: number; size?: number; fill?: string; children: string }) => (
  <text x={x} y={y} fontSize={size} fill={fill} textAnchor="middle" fontWeight="bold" fontFamily="Liberation Sans, sans-serif">
    {children}
  </text>
);

const APPS: { n: string; run?: boolean; active?: boolean; icon: ReactNode }[] = [
  { n: "Представление задач", icon: <S><path d="M4.500 7.500h7v5h-7zM4.500 3v2h7V3M4.500 17v-2h7v2M15 3v14" fill="none" stroke="#dfe5e8" /><path d="M14 6h2v3h-2z" fill="#fff" /></S> },
  { n: "Store", icon: <S><path d="M6 5V2h8v3" fill="none" stroke="#3fb2ea" strokeWidth="1.500" /><rect x="1" y="4" width="18" height="15" rx="2" fill="#f4f4f4" /><path d="M6.500 8h3v3h-3z" fill="#e8502b" /><path d="M10.500 8h3v3h-3z" fill="#7db529" /><path d="M6.500 12h3v3h-3z" fill="#2aa1e8" /><path d="M10.500 12h3v3h-3z" fill="#f6b50e" /></S> },
  { n: "Проводник", run: true, icon: <S><path d="M2 3h6l2 2h8v12H2z" fill="#e9a928" /><path d="M2 7h16v10H2z" fill="#fbd667" /><path d="M5 17v-6h10v6h-3v-3H8v3z" fill="#3b92d8" /></S> },
  { n: "Edge", icon: <S><circle cx="10" cy="10" r="9" fill="#1676c6" /><path d="M1 9a9 9 0 0 1 18 0q0 4-4 4t-3-3-4-3-7 2z" fill="#36b7d8" /><path d="M11 1a9 9 0 0 1 8 8q0 4-4 4t-3-3q3-5-1-9z" fill="#63d36b" /><path d="M8 8q-4 5 2 9 4 1 7-1-7 0-7-5z" fill="#0c4f9c" /></S> },
  { n: "Архив", icon: <S><path d="M7 2h9v13H7z" fill="#777" /><path d="M8 3h7v2H8zM8 7h7v2H8zM8 11h7v2H8z" fill="#ddd" /><path d="M3 12h8v5H3z" fill="#444" stroke="#aaa" /><circle cx="10" cy="17" r="2" fill="#e33" /><circle cx="14" cy="16" r="2" fill="#ccc" /></S> },
  { n: "Internet Explorer", icon: <S><path d="M17 11.500H6.500q.5 3.500 3.800 3.500 2 0 3-1.500h3.500q-1.500 4.500-6.500 4.500-7.300-.5-7.300-7.500T10.300 3q6.700.5 6.700 8.500zM6.500 8.800h7q-.5-3-3.500-3t-3.500 3z" fill="#5cc8f4" /><path d="M4 17.500Q0 19 3 12T15 2q4-2 3 2" fill="none" stroke="#f2c230" strokeWidth="1.600" /></S> },
  { n: "Xbox", icon: <S><circle cx="10" cy="10" r="8.500" fill="#9da5a0" /><path d="M4 6q3-4 6-3l6 8-3 5-3-5z" fill="#37a33e" /><path d="M3 5l13 11M14 4L4 16" stroke="#eee" strokeWidth="2" /><circle cx="13" cy="7" r="3" fill="#2d3a30" /></S> },
  { n: "Yandex", run: true, icon: <S><circle cx="10" cy="10" r="9" fill="#fff" /><path d="M5.500 5L10 11.500V17M14.500 4.500L10 11.500" stroke="#e8252d" strokeWidth="2.400" fill="none" /></S> },
  { n: "Chrome", icon: <S><circle cx="10" cy="10" r="9" fill="#fbc116" /><path d="M10 10L2.200 5.500A9 9 0 0 0 10 19l4-6.500z" fill="#2da94f" /><path d="M2.200 5.500a9 9 0 0 1 15.600 0H10L6 12z" fill="#e33b2e" /><circle cx="10" cy="10" r="4.400" fill="#fff" /><circle cx="10" cy="10" r="3.400" fill="#4285f4" /></S> },
  { n: "WPS", run: true, icon: <S><circle cx="10" cy="10" r="9" fill="#f5351b" /><path d="M4 6l3 8 3-6 2 6 4-8M4 6h12" fill="none" stroke="#fff" strokeWidth="1.600" /></S> },
  { n: "Дерево", icon: <S><path d="M9 10h2.500l1 8h2v1H6v-1h2.500z" fill="#b9a887" /><path d="M3 10q-2-3 1-4 1-5 6-4.500 5 0 5 3.500 4 2 2 5 0 4-4 3.500-4 3-7 0-3 0-3-3.500z" fill="#66743f" /><path d="M6 6l3 3M11 4l2 4M7 11l4-2M13 10l3-2" stroke="#a3ac70" /></S> },
  { n: "Photoshop", icon: <S><rect x="2" y="2" width="16" height="16" fill="#041c26" stroke="#19b4d4" strokeWidth="1.500" /><Letter size={9} y={13} fill="#2cc5e6">Ps</Letter></S> },
  { n: "B", icon: <S><rect x="1.500" y="1.500" width="17" height="17" rx="2" fill="#f20d16" /><Letter size={13} y={15} fill="#ffe11a">B</Letter></S> },
  { n: "Meta", icon: <S><path d="M10 10Q7.500 5 5 5T1.500 11q0 4 2.500 4 2 0 6-5 2.500-5 5-5t3.500 6q0 4-2.500 4-2 0-6-5z" fill="none" stroke="#0a6ae6" strokeWidth="1.800" /></S> },
  { n: "C", icon: <S><path d="M5 1.500h14v14l-3 3H1.500V5z" fill="#1f6fe5" stroke="#eef3fb" strokeWidth="1.500" /><Letter>C</Letter></S> },
  { n: "Компас", run: true, active: true, icon: <S><rect x="1.500" y="1.500" width="17" height="17" fill="#213a4a" stroke="#1899d6" /><path d={c(10, 10, 6.500) + "M8 5v10M13 5L8.500 10l4.500 5M4 7l4 3-4 3"} fill="none" stroke="#1b9bd7" /></S> },
  { n: "Таблица", run: true, icon: <S><rect x="1" y="1" width="18" height="18" rx="3" fill="#0aae42" /><path d="M5.500 5H9v4.500H5.500zM11 5h3.500v4.500H11zM5.500 10.500H9V15H5.500zM11 10.500h3.500V15H11zM9 8h2v4H9z" fill="#fff" /></S> },
  { n: "Документ", icon: <S><path d="M4 2h9l3 3v13H4z" fill="#f3f3f3" /><path d="M13 2v3h3z" fill="#c9c9c9" /></S> },
  { n: "uTorrent", icon: <S><circle cx="10" cy="10" r="8.500" fill="#d7dfd6" /><circle cx="10" cy="10" r="7.300" fill="#2c8a3b" /><path d="M7 5v7q0 2 2.500 2T13 12V5M13 11q0 3 2 2.500M7 12v4" fill="none" stroke="#fff" strokeWidth="2" /></S> },
  { n: "Foobar", run: true, icon: <S><circle cx="10" cy="10" r="9" fill="#f2f2f2" /><path d="M4 6q6-3 12 0l-1 7-5 4-5-4z" fill="#222" /><path d="M9 14l5-8 2 1-3 7z" fill="#2a8f86" /></S> },
  { n: "Параметры", run: true, icon: <S><g stroke="#fff" strokeWidth="2.200" fill="none"><circle cx="10" cy="10" r="4.300" /><path d="M10 2.500v3M10 14.500v3M2.500 10h3M14.500 10h3M4.700 4.700l2 2M13.300 13.300l2 2M15.300 4.700l-2 2M6.700 13.300l-2 2" /></g></S> },
  { n: "Steam", run: true, icon: <S><circle cx="10" cy="10" r="8.800" fill="#15588f" /><path d="M1.500 8a8.800 8.800 0 0 1 17 0z" fill="#14213d" /><path d="M2 12l5 2 5-5" stroke="#fff" strokeWidth="3" fill="none" /><circle cx="12.500" cy="7.500" r="3.300" fill="#fff" /><circle cx="12.500" cy="7.500" r="1.700" fill="#15588f" /></S> },
];

function Taskbar() {
  return (
    <footer className="flex h-[30px] shrink-0 bg-gradient-to-r from-[#22383f] via-[#21374a] to-[#1a2742] text-white">
      <button aria-label="Пуск" className="flex w-9 shrink-0 items-center justify-center">
        <svg viewBox="0 0 12 12" className="size-3" aria-hidden="true"><path d="M0 1.700l5.500-.8v4.800H0zM6.200.8L12 0v5.700H6.200zM0 6.300h5.500v4.800L0 10.300zM6.200 6.300H12V12l-5.800-.8z" fill="#fff" /></svg>
      </button>
      <label className="flex w-[258px] shrink-0 items-center gap-2 border border-[#c4c4c4] bg-[#f2f2f2] pl-[7px] text-[#333]">
        <Glyph n="search" className="size-[14px]" w={1.100} />
        <input aria-label="Поиск" placeholder="Чтобы начать поиск, введите здесь запрос" className="w-full min-w-0 bg-transparent text-[11px] outline-none placeholder:text-[#444]" />
      </label>
      <div className="flex w-[810px] shrink-0">
        {APPS.map((a) => (
          <button key={a.n} aria-label={a.n} className={"relative flex flex-1 items-center justify-center " + (a.active ? "bg-[#4d626c]" : "")}>
            {a.icon}
            {a.run && <span className={"absolute bottom-0 h-[2px] bg-[#76b3e6] " + (a.active ? "inset-x-0" : "inset-x-[3px]")} />}
          </button>
        ))}
      </div>
      <div className="ml-auto flex items-center text-[9px]">
        <button aria-label="Скрытые значки" className="mr-[9px]">
          <svg viewBox="0 0 10 6" className="h-[6px] w-[10px]"><path d="M1 5l4-4 4 4" fill="none" stroke="#fff" /></svg>
        </button>
        <svg viewBox="0 0 10 12" className="mr-[7px] h-3 w-[10px]" aria-hidden="true"><path d="M1 4h6v5H1zM7 5h2v3H7M2 2q2-2 4 0M2 11q2 1 4 0" fill="none" stroke="#fff" /></svg>
        <svg viewBox="0 0 18 11" className="mr-2 h-[11px] w-[18px]" aria-hidden="true"><path d="M.5 .5h17v10H.5z" fill="none" stroke="#fff" /><path d="M3 3.500h12M3 5.500h12" stroke="#fff" strokeDasharray="1 1" /><path d="M4 8.500h10" stroke="#fff" /></svg>
        <span className="mr-[9px]">ENG</span>
        <div className="mr-1 text-center leading-[13px]">
          <div>8:02</div>
          <div>Вс 04.02.24</div>
        </div>
        <div className="h-[30px] w-[3px] border-l border-[#7d8796]" />
      </div>
    </footer>
  );
}

export default function App() {
  return (
    <div className="flex h-screen flex-col overflow-hidden font-['Roboto','Noto_Sans',sans-serif]">
      <MenuBar />
      <TabBar />
      <Ribbon />
      <main className="flex min-h-0 grow">
        <div className="w-[21px] shrink-0 border-r border-[#808080] bg-[#cbcbcb]">
          <button aria-label="Меню" className="flex h-[18px] w-full items-center justify-center bg-[#f1f1f1] text-[#222]">
            <svg viewBox="0 0 11 12" className="h-3 w-[11px]"><path d="M0 1.500h11M0 6h11M0 10.500h11" stroke="currentColor" strokeWidth="2.200" /></svg>
          </button>
        </div>
        <div className="flex w-[19px] shrink-0 flex-col bg-[#cbcbcb] text-[#333]">
          <button aria-label="Дерево" className="flex h-[18px] items-center justify-center bg-[#474747] text-white"><Glyph n="tree" className="size-[13px]" w={1} /></button>
          <button aria-label="Параметры" className="flex h-[19px] items-center justify-center bg-[#f1f1f1]"><Glyph n="sheet" className="size-3" w={1} /></button>
          <button aria-label="Переменные" className="flex h-[19px] items-center justify-center bg-[#f1f1f1] font-['Liberation_Serif',serif] text-[15px] italic">f<sub className="text-[10px]">x</sub></button>
        </div>
        <TreePanel />
        <section className="relative min-w-0 grow bg-gradient-to-b from-[#dddddd] via-[#c7c7cc] to-[#a8a8b1]">
          <Model />
          <ViewToolbar />
        </section>
      </main>
      <Taskbar />
    </div>
  );
}
